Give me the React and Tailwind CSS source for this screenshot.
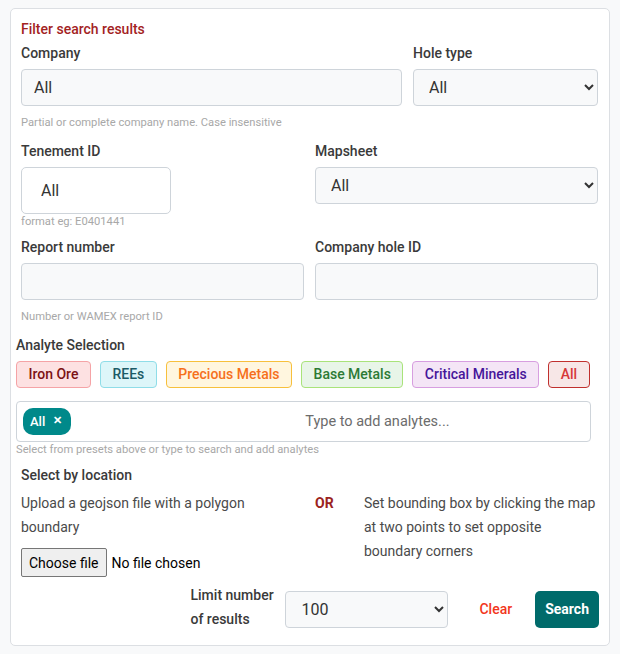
import React from "react";

const font = { fontFamily: "Roboto, 'Noto Sans', sans-serif" };

function Label({ children, className = "" }) {
  return (
    <div className={"text-[14px] leading-[20px] font-medium text-[#3a3a3a] " + className}>{children}</div>
  );
}

function Help({ children, className = "" }) {
  return <div className={"text-[11.2px] leading-[16px] text-[#a8a8a8] " + className}>{children}</div>;
}

function Select({ value, className = "" }) {
  return (
    <select
      defaultValue={value}
      className={
        "h-[37px] rounded-[4px] border border-[#ced4da] bg-[#f8f9fa] pl-[11px] pr-[8px] text-[16px] text-[#333] outline-none " +
        className
      }
      style={font}
    >
      <option>{value}</option>
    </select>
  );
}

export default function App() {
  const badges = [
    { t: "Iron Ore", c: "bg-[#fde1e2] border-[#f5a3a6] text-[#7c1215]" },
    { t: "REEs", c: "bg-[#ddf6f9] border-[#8fdde8] text-[#1c5b66]" },
    { t: "Precious Metals", c: "bg-[#fff6df] border-[#f7c03c] text-[#f6701c]" },
    { t: "Base Metals", c: "bg-[#e8f5e8] border-[#a9e37a] text-[#2c7a35]" },
    { t: "Critical Minerals", c: "bg-[#f4e5f6] border-[#d79ee0] text-[#46169a]" },
    { t: "All", c: "bg-[#f7e7e7] border-[#c0302e] text-[#d6383a]" },
  ];
  return (
    <div className="min-h-[654px] w-[620px] bg-[#f8f9fa] pt-[8px] px-[10px]" style={font}>
      <div className="h-[638px] rounded-[5px] border border-[#dcdfe3] bg-white px-[10px] pt-[10px]">
        <div className="text-[14px] leading-[20px] font-medium text-[#a3231f]">Filter search results</div>

        <div className="mt-[4px] grid grid-cols-[381px_185px] gap-x-[11px]">
          <div>
            <Label>Company</Label>
            <input
              defaultValue="All"
              className="mt-[6px] h-[37px] w-full rounded-[4px] border border-[#ced4da] bg-[#f8f9fa] px-[12px] text-[16px] text-[#333] outline-none"
              style={font}
            />
          </div>
          <div>
            <Label>Hole type</Label>
            <Select value="All" className="mt-[6px] w-full" />
          </div>
        </div>
        <Help className="mt-[9px]">Partial or complete company name. Case insensitive</Help>

        <div className="mt-[10px] grid grid-cols-[283px_283px] gap-x-[11px]">
          <div>
            <Label>Tenement ID</Label>
            <input
              defaultValue="All"
              className="mt-[6px] h-[47px] w-[150px] rounded-[5px] border border-[#ced4da] bg-white px-[19px] text-[16px] text-[#333] outline-none"
              style={font}
            />
            <Help>format eg: E0401441</Help>
          </div>
          <div>
            <Label>Mapsheet</Label>
            <Select value="All" className="mt-[6px] w-full" />
          </div>
        </div>

        <div className="mt-[7px] grid grid-cols-[283px_283px] gap-x-[11px]">
          <div>
            <Label>Report number</Label>
            <input
              className="mt-[6px] h-[37px] w-full rounded-[4px] border border-[#ced4da] bg-[#f8f9fa] px-[12px] text-[16px] outline-none"
              style={font}
            />
          </div>
          <div>
            <Label>Company hole ID</Label>
            <input
              className="mt-[6px] h-[37px] w-full rounded-[4px] border border-[#ced4da] bg-[#f8f9fa] px-[12px] text-[16px] outline-none"
              style={font}
            />
          </div>
        </div>
        <Help className="mt-[9px]">Number or WAMEX report ID</Help>

        <div className="-ml-[5px] mr-[8px] mt-[10px]">
          <Label>Analyte Selection</Label>
          <div className="mt-[6px] flex gap-[9px]">
            {badges.map((b) => (
              <span
                key={b.t}
                className={
                  "flex h-[27px] shrink-0 items-center whitespace-nowrap rounded-[4px] border px-[11.5px] text-[14px] font-medium " +
                  b.c
                }
              >
                {b.t}
              </span>
            ))}
          </div>
          <div className="mt-[13px] flex h-[41px] items-center rounded-[4px] border border-[#ced4da] bg-white pl-[6px]">
            <span className="flex h-[27px] items-center gap-[8px] rounded-[10px] bg-[#00898a] pl-[7px] pr-[9px] text-[13px] font-medium text-white">
              All <span className="text-[11px] font-bold">✕</span>
            </span>
            <span className="ml-[234px] text-[14.5px] text-[#6c6c6c]">Type to add analytes...</span>
          </div>
          <Help>Select from presets above or type to search and add analytes</Help>
        </div>

        <Label className="mt-[7px]">Select by location</Label>
        <div className="mt-[6px] flex text-[14px] leading-[24px] text-[#4a4a4a]">
          <div className="w-[294px]">
            <div>
              Upload a geojson file with a polygon
              <br />
              boundary
            </div>
            <div className="mt-[9px] flex items-center gap-[5px]">
              <span className="flex h-[29px] items-center rounded-[2px] border border-[#767676] bg-[#efefef] px-[7px] text-[14px] text-black">
                Choose file
              </span>
              <span className="text-[14px] text-black">No file chosen</span>
            </div>
          </div>
          <div className="w-[49px] font-bold text-[#9b2320]">OR</div>
          <div className="w-[234px]">
            Set bounding box by clicking the map
            <br />
            at two points to set opposite
            <br />
            boundary corners
          </div>
        </div>

        <div className="mt-[6px] flex items-center justify-end">
          <div className="mb-[4px] w-[90px] text-[14px] leading-[24px] font-medium text-[#3a3a3a]">
            Limit number
            <br />
            of results
          </div>
          <Select value="100" className="ml-[5px] w-[163px]" />
          <button className="ml-[19px] h-[37px] px-[12px] text-[14px] font-medium text-[#f2361c]">Clear</button>
          <button className="ml-[11px] h-[37px] rounded-[5px] bg-[#006b6b] px-[10px] text-[14px] font-bold text-white">
            Search
          </button>
        </div>
      </div>
    </div>
  );
}
